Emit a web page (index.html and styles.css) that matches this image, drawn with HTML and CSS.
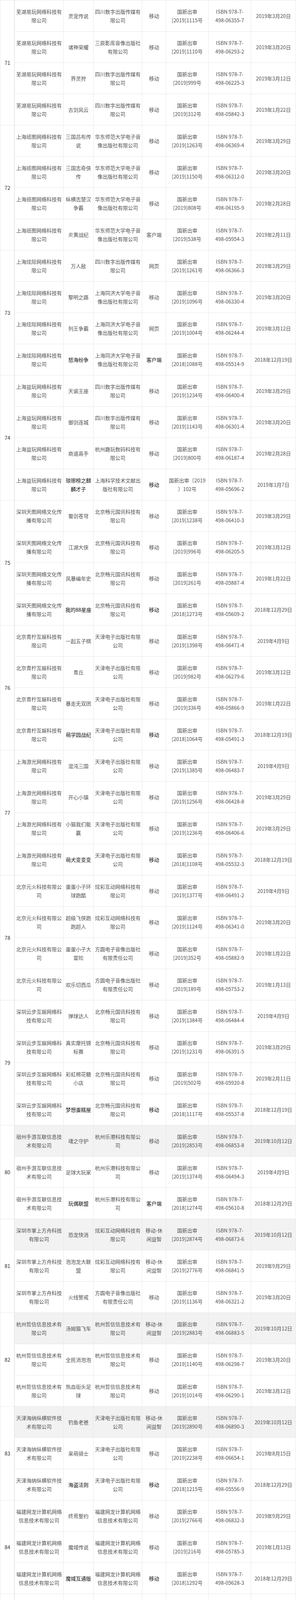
FILE: index.html
```html
<!DOCTYPE html>
<html lang="zh-CN">
<head>
<meta charset="utf-8">
<title>游戏审批列表</title>
<link rel="stylesheet" href="styles.css">
</head>
<body>
<div class="sheet">
<div class="no r4">71</div>
<div class="c">芜湖易玩网络科技有限公司</div><div class="c">灵宠传说</div><div class="c">四川数字出版传媒有限公司</div><div class="c">移动</div><div class="c">国新出审<br>[2019]1115号</div><div class="c">ISBN 978-7-<br>498-06355-7</div><div class="c">2019年3月20日</div>
<div class="c">芜湖易玩网络科技有限公司</div><div class="c">诸神荣耀</div><div class="c">三辰影库音像出版社有限公司</div><div class="c">移动</div><div class="c">国新出审<br>[2019]1110号</div><div class="c">ISBN 978-7-<br>498-06293-2</div><div class="c">2019年3月20日</div>
<div class="c">芜湖易玩网络科技有限公司</div><div class="c">界灵狩</div><div class="c">四川数字出版传媒有限公司</div><div class="c">移动</div><div class="c">国新出审<br>[2019]999号</div><div class="c">ISBN 978-7-<br>498-06225-3</div><div class="c">2019年3月12日</div>
<div class="c">芜湖易玩网络科技有限公司</div><div class="c">古剑风云</div><div class="c">四川数字出版传媒有限公司</div><div class="c">移动</div><div class="c">国新出审<br>[2019]312号</div><div class="c">ISBN 978-7-<br>498-05842-3</div><div class="c">2019年1月22日</div>

<div class="no r4">72</div>
<div class="c">上海班图网络科技有限公司</div><div class="c">三国吕布传说</div><div class="c">华东师范大学电子音像出版社有限公司</div><div class="c">移动</div><div class="c">国新出审<br>[2019]1263号</div><div class="c">ISBN 978-7-<br>498-06369-4</div><div class="c">2019年3月29日</div>
<div class="c">上海班图网络科技有限公司</div><div class="c">三国志奇侠传</div><div class="c">华东师范大学电子音像出版社有限公司</div><div class="c">移动</div><div class="c">国新出审<br>[2019]1150号</div><div class="c">ISBN 978-7-<br>498-06312-0</div><div class="c">2019年3月20日</div>
<div class="c">上海班图网络科技有限公司</div><div class="c">纵横志楚汉争霸</div><div class="c">华东师范大学电子音像出版社有限公司</div><div class="c">移动</div><div class="c">国新出审<br>[2019]808号</div><div class="c">ISBN 978-7-<br>498-06195-9</div><div class="c">2019年2月28日</div>
<div class="c">上海班图网络科技有限公司</div><div class="c">炎黄战纪</div><div class="c">华东师范大学电子音像出版社有限公司</div><div class="c">客户端</div><div class="c">国新出审<br>[2019]538号</div><div class="c">ISBN 978-7-<br>498-05954-3</div><div class="c">2019年2月11日</div>

<div class="no r4">73</div>
<div class="c">上海炫际网络科技有限公司</div><div class="c">万人敌</div><div class="c">四川数字出版传媒有限公司</div><div class="c">网页</div><div class="c">国新出审<br>[2019]1261号</div><div class="c">ISBN 978-7-<br>498-06366-3</div><div class="c">2019年3月29日</div>
<div class="c">上海炫际网络科技有限公司</div><div class="c">黎明之路</div><div class="c">上海同济大学电子音像出版社有限公司</div><div class="c">移动</div><div class="c">国新出审<br>[2019]1096号</div><div class="c">ISBN 978-7-<br>498-06330-4</div><div class="c">2019年3月20日</div>
<div class="c">上海炫际网络科技有限公司</div><div class="c">列王争霸</div><div class="c">上海同济大学电子音像出版社有限公司</div><div class="c">网页</div><div class="c">国新出审<br>[2019]1004号</div><div class="c">ISBN 978-7-<br>498-06244-4</div><div class="c">2019年3月12日</div>
<div class="c">上海炫际网络科技有限公司</div><div class="c dk">怒海纷争</div><div class="c">上海同济大学电子音像出版社有限公司</div><div class="c dk">客户端</div><div class="c">国新出审<br>[2018]1088号</div><div class="c">ISBN 978-7-<br>498-05514-9</div><div class="c">2018年12月19日</div>

<div class="no r4">74</div>
<div class="c">上海益玩网络科技有限公司</div><div class="c">天谕王座</div><div class="c">四川数字出版传媒有限公司</div><div class="c">移动</div><div class="c">国新出审<br>[2019]1234号</div><div class="c">ISBN 978-7-<br>498-06400-4</div><div class="c">2019年3月29日</div>
<div class="c">上海益玩网络科技有限公司</div><div class="c">御剑连城</div><div class="c">四川数字出版传媒有限公司</div><div class="c">移动</div><div class="c">国新出审<br>[2019]1143号</div><div class="c">ISBN 978-7-<br>498-06301-4</div><div class="c">2019年3月20日</div>
<div class="c">上海益玩网络科技有限公司</div><div class="c">商道高手</div><div class="c">杭州趣玩数码科技有限公司</div><div class="c">移动</div><div class="c">国新出审<br>[2019]800号</div><div class="c">ISBN 978-7-<br>498-06187-4</div><div class="c">2019年2月28日</div>
<div class="c">上海益玩网络科技有限公司</div><div class="c dk">琅琊榜之麒<br>麟才子</div><div class="c">上海科学技术文献出版社有限公司</div><div class="c dk">移动</div><div class="c">国新出审〔2019<br>〕102号</div><div class="c">ISBN 978-7-<br>498-05696-2</div><div class="c">2019年1月7日</div>

<div class="no r4">75</div>
<div class="c">深圳天图网络文化传播有限公司</div><div class="c">蜀剑苍穹</div><div class="c">北京畅元国讯科技有限公司</div><div class="c">移动</div><div class="c">国新出审<br>[2019]1238号</div><div class="c">ISBN 978-7-<br>498-06410-3</div><div class="c">2019年3月29日</div>
<div class="c">深圳天图网络文化传播有限公司</div><div class="c">江湖大侠</div><div class="c">北京畅元国讯科技有限公司</div><div class="c">移动</div><div class="c">国新出审<br>[2019]996号</div><div class="c">ISBN 978-7-<br>498-06205-5</div><div class="c">2019年3月12日</div>
<div class="c">深圳天图网络文化传播有限公司</div><div class="c">风暴编年史</div><div class="c">北京畅元国讯科技有限公司</div><div class="c">移动</div><div class="c">国新出审<br>[2019]261号</div><div class="c">ISBN 978-7-<br>498-05887-4</div><div class="c">2019年1月22日</div>
<div class="c">深圳天图网络文化传播有限公司</div><div class="c dk">我的88星座</div><div class="c">北京畅元国讯科技有限公司</div><div class="c dk">移动</div><div class="c">国新出审<br>[2018]1273号</div><div class="c">ISBN 978-7-<br>498-05609-2</div><div class="c">2018年12月29日</div>

<div class="no r4">76</div>
<div class="c">北京青柠互娱科技有限公司</div><div class="c">一起五子棋</div><div class="c">天津电子出版社有限公司</div><div class="c">移动</div><div class="c">国新出审<br>[2019]1398号</div><div class="c">ISBN 978-7-<br>498-06471-4</div><div class="c">2019年4月9日</div>
<div class="c">北京青柠互娱科技有限公司</div><div class="c">青丘</div><div class="c">天津电子出版社有限公司</div><div class="c">移动</div><div class="c">国新出审<br>[2019]982号</div><div class="c">ISBN 978-7-<br>498-06279-6</div><div class="c">2019年3月12日</div>
<div class="c">北京青柠互娱科技有限公司</div><div class="c">暴走无双团</div><div class="c">天津电子出版社有限公司</div><div class="c">移动</div><div class="c">国新出审<br>[2019]336号</div><div class="c">ISBN 978-7-<br>498-05866-9</div><div class="c">2019年1月22日</div>
<div class="c">北京青柠互娱科技有限公司</div><div class="c dk">萌学园战纪</div><div class="c">天津电子出版社有限公司</div><div class="c dk">移动</div><div class="c">国新出审<br>[2018]1064号</div><div class="c">ISBN 978-7-<br>498-05491-3</div><div class="c">2018年12月19日</div>

<div class="no r4">77</div>
<div class="c">上海游光网络科技有限公司</div><div class="c">混沌三国</div><div class="c">天津电子出版社有限公司</div><div class="c">移动</div><div class="c">国新出审<br>[2019]1385号</div><div class="c">ISBN 978-7-<br>498-06483-7</div><div class="c">2019年4月9日</div>
<div class="c">上海游光网络科技有限公司</div><div class="c">开心小镇</div><div class="c">天津电子出版社有限公司</div><div class="c">移动</div><div class="c">国新出审<br>[2019]1256号</div><div class="c">ISBN 978-7-<br>498-06428-8</div><div class="c">2019年3月29日</div>
<div class="c">上海游光网络科技有限公司</div><div class="c">小猫我们能<br>赢</div><div class="c">天津电子出版社有限公司</div><div class="c">移动</div><div class="c">国新出审<br>[2019]1236号</div><div class="c">ISBN 978-7-<br>498-06406-6</div><div class="c">2019年3月29日</div>
<div class="c">上海游光网络科技有限公司</div><div class="c dk">萌犬变变变</div><div class="c">天津电子出版社有限公司</div><div class="c dk">移动</div><div class="c">国新出审<br>[2018]1108号</div><div class="c">ISBN 978-7-<br>498-05532-3</div><div class="c">2018年12月19日</div>

<div class="no r4">78</div>
<div class="c">北京元火科技有限公司</div><div class="c">蛋蛋小子环<br>球跑酷</div><div class="c">炫彩互动网络科技有限公司</div><div class="c">移动</div><div class="c">国新出审<br>[2019]1377号</div><div class="c">ISBN 978-7-<br>498-06491-2</div><div class="c">2019年4月9日</div>
<div class="c">北京元火科技有限公司</div><div class="c">超级飞侠跑<br>跑超人</div><div class="c">炫彩互动网络科技有限公司</div><div class="c">移动</div><div class="c">国新出审<br>[2019]1124号</div><div class="c">ISBN 978-7-<br>498-06341-0</div><div class="c">2019年3月20日</div>
<div class="c">北京元火科技有限公司</div><div class="c">蛋蛋小子大<br>冒险</div><div class="c">方圆电子音像出版社有限责任公司</div><div class="c">移动</div><div class="c">国新出审<br>[2019]352号</div><div class="c">ISBN 978-7-<br>498-05882-9</div><div class="c">2019年1月22日</div>
<div class="c">北京元火科技有限公司</div><div class="c">欢乐切西瓜</div><div class="c">方圆电子音像出版社有限责任公司</div><div class="c">移动</div><div class="c">国新出审<br>[2019]189号</div><div class="c">ISBN 978-7-<br>498-05753-2</div><div class="c">2019年1月13日</div>

<div class="no r4">79</div>
<div class="c">深圳云步互娱网络科技有限公司</div><div class="c">弹球达人</div><div class="c">北京畅元国讯科技有限公司</div><div class="c">移动</div><div class="c">国新出审<br>[2019]1384号</div><div class="c">ISBN 978-7-<br>498-06484-4</div><div class="c">2019年4月9日</div>
<div class="c">深圳云步互娱网络科技有限公司</div><div class="c">真实摩托锦<br>标赛</div><div class="c">北京畅元国讯科技有限公司</div><div class="c">移动</div><div class="c">国新出审<br>[2019]1231号</div><div class="c">ISBN 978-7-<br>498-06391-5</div><div class="c">2019年3月29日</div>
<div class="c">深圳云步互娱网络科技有限公司</div><div class="c">彩虹棉花糖<br>小店</div><div class="c">北京畅元国讯科技有限公司</div><div class="c">移动</div><div class="c">国新出审<br>[2019]502号</div><div class="c">ISBN 978-7-<br>498-05920-8</div><div class="c">2019年2月11日</div>
<div class="c">深圳云步互娱网络科技有限公司</div><div class="c dk">梦想蛋糕屋</div><div class="c">北京畅元国讯科技有限公司</div><div class="c dk">移动</div><div class="c">国新出审<br>[2018]1117号</div><div class="c">ISBN 978-7-<br>498-05537-8</div><div class="c">2018年12月19日</div>

<div class="no r3">80</div>
<div class="c hl">宿州手游互联信息技术有限公司</div><div class="c hl">魂之守护</div><div class="c hl">杭州乐港科技有限公司</div><div class="c hl">移动</div><div class="c hl">国新出审<br>[2019]2853号</div><div class="c hl">ISBN 978-7-<br>498-06853-8</div><div class="c hl">2019年10月12日</div>
<div class="c">宿州手游互联信息技术有限公司</div><div class="c">足球大玩家</div><div class="c">杭州乐港科技有限公司</div><div class="c">移动</div><div class="c">国新出审<br>[2019]1374号</div><div class="c">ISBN 978-7-<br>498-06494-3</div><div class="c">2019年4月9日</div>
<div class="c">宿州手游互联信息技术有限公司</div><div class="c dk">玩偶联盟</div><div class="c">杭州乐港科技有限公司</div><div class="c dk">客户端</div><div class="c">国新出审<br>[2018]1274号</div><div class="c">ISBN 978-7-<br>498-05610-8</div><div class="c">2018年12月29日</div>

<div class="no r3">81</div>
<div class="c hl">深圳市掌上方舟科技有限公司</div><div class="c hl">恐龙快消</div><div class="c hl">炫彩互动网络科技有限公司</div><div class="c hl">移动-休<br>闲益智</div><div class="c hl">国新出审<br>[2019]2874号</div><div class="c hl">ISBN 978-7-<br>498-06873-6</div><div class="c hl">2019年10月12日</div>
<div class="c">深圳市掌上方舟科技有限公司</div><div class="c">泡泡龙大联<br>盟</div><div class="c">炫彩互动网络科技有限公司</div><div class="c">移动-休<br>闲益智</div><div class="c">国新出审<br>[2019]2776号</div><div class="c">ISBN 978-7-<br>498-06841-5</div><div class="c">2019年9月29日</div>
<div class="c">深圳市掌上方舟科技有限公司</div><div class="c">火线警戒</div><div class="c">方圆电子音像出版社有限责任公司</div><div class="c">移动</div><div class="c">国新出审<br>[2019]1136号</div><div class="c">ISBN 978-7-<br>498-06321-2</div><div class="c">2019年3月20日</div>

<div class="no r3">82</div>
<div class="c hl">杭州哲信信息技术有限公司</div><div class="c hl">汤姆猫飞车</div><div class="c hl">杭州哲信信息技术有限公司</div><div class="c hl">移动-休<br>闲益智</div><div class="c hl">国新出审<br>[2019]2883号</div><div class="c hl">ISBN 978-7-<br>498-06883-5</div><div class="c hl">2019年10月12日</div>
<div class="c">杭州哲信信息技术有限公司</div><div class="c">全民消泡泡</div><div class="c">杭州哲信信息技术有限公司</div><div class="c">移动</div><div class="c">国新出审<br>[2019]1140号</div><div class="c">ISBN 978-7-<br>498-06298-7</div><div class="c">2019年3月20日</div>
<div class="c">杭州哲信信息技术有限公司</div><div class="c">热血街头足<br>球</div><div class="c">杭州哲信信息技术有限公司</div><div class="c">移动</div><div class="c">国新出审<br>[2019]1014号</div><div class="c">ISBN 978-7-<br>498-06290-1</div><div class="c">2019年3月12日</div>

<div class="no r3">83</div>
<div class="c hl">天津海纳纵横软件技术有限公司</div><div class="c hl">钓鱼老爸</div><div class="c hl">天津电子出版社有限公司</div><div class="c hl">移动-休<br>闲益智</div><div class="c hl">国新出审<br>[2019]2890号</div><div class="c hl">ISBN 978-7-<br>498-06890-3</div><div class="c hl">2019年10月12日</div>
<div class="c">天津海纳纵横软件技术有限公司</div><div class="c">呆萌骑士</div><div class="c">天津电子出版社有限公司</div><div class="c">移动</div><div class="c">国新出审<br>[2019]2238号</div><div class="c">ISBN 978-7-<br>498-06654-1</div><div class="c">2019年8月15日</div>
<div class="c">天津海纳纵横软件技术有限公司</div><div class="c dk">海盗法则</div><div class="c">天津电子出版社有限公司</div><div class="c dk">移动</div><div class="c">国新出审<br>[2018]1215号</div><div class="c">ISBN 978-7-<br>498-05556-9</div><div class="c">2018年12月29日</div>

<div class="no r3">84</div>
<div class="c">福建网龙计算机网络信息技术有限公司</div><div class="c">终焉誓约</div><div class="c">福建网龙计算机网络信息技术有限公司</div><div class="c">移动</div><div class="c">国新出审<br>[2019]2766号</div><div class="c">ISBN 978-7-<br>498-06832-3</div><div class="c">2019年9月29日</div>
<div class="c">福建网龙计算机网络信息技术有限公司</div><div class="c">魔域传说</div><div class="c">福建网龙计算机网络信息技术有限公司</div><div class="c">移动</div><div class="c">国新出审<br>[2019]216号</div><div class="c">ISBN 978-7-<br>498-05785-3</div><div class="c">2019年1月13日</div>
<div class="c">福建网龙计算机网络信息技术有限公司</div><div class="c dk">魔域互通版</div><div class="c">福建网龙计算机网络信息技术有限公司</div><div class="c dk">移动</div><div class="c">国新出审<br>[2018]1292号</div><div class="c">ISBN 978-7-<br>498-05628-3</div><div class="c">2018年12月29日</div>

<div class="no r3">85</div>
<div class="c">成都西山居世游科技有限公司</div><div class="c">双生视界</div><div class="c">成都西山居世游科技有限公司</div><div class="c">移动</div><div class="c">国新出审<br>[2019]2768号</div><div class="c">ISBN 978-7-<br>498-06831-6</div><div class="c">2019年9月29日</div>
<div class="c">成都西山居世游科技有限公司</div><div class="c">剑网3</div><div class="c">成都西山居世游科技有限公司</div><div class="c">客户端</div><div class="c">国新出审<br>[2019]1869号</div><div class="c">ISBN 978-7-<br>498-06568-1</div><div class="c">2019年6月28日</div>
<div class="c">成都西山居世游科技有限公司</div><div class="c">四海仙妖记</div><div class="c">天津电子出版社有限公司</div><div class="c">移动</div><div class="c">国新出审<br>[2019]1266号</div><div class="c">ISBN 978-7-<br>498-06372-4</div><div class="c">2019年3月29日</div>

<div class="no r3">86</div>
<div class="c">上海星玩网络科技有限公司</div><div class="c">亮剑</div><div class="c">上海科学技术文献出版社有限公司</div><div class="c">移动</div><div class="c">国新出审<br>[2019]2783号</div><div class="c">ISBN 978-7-<br>498-06848-4</div><div class="c">2019年9月29日</div>
<div class="c">上海星玩网络科技有限公司</div><div class="c dk">影之痕</div><div class="c">四川数字出版传媒有限公司</div><div class="c dk">移动</div><div class="c">国新出审<br>[2018]1275号</div><div class="c">ISBN 978-7-<br>498-05611-5</div><div class="c">2018年12月29日</div>
<div class="c">上海星玩网络科技有限公司</div><div class="c dk">修真情缘</div><div class="c">四川数字出版传媒有限公司</div><div class="c dk">移动</div><div class="c">国新出审<br>[2018]1073号</div><div class="c">ISBN 978-7-<br>498-05499-9</div><div class="c">2018年12月19日</div>

<div class="no r3">87</div>
<div class="c">上海数龙科技有限公司</div><div class="c">小森生活</div><div class="c">上海数龙科技有限公司</div><div class="c">移动</div><div class="c">国新出审<br>[2019]2721号</div><div class="c">ISBN 978-7-<br>498-06813-2</div><div class="c">2019年9月24日</div>
<div class="c">上海数龙科技有限公司</div><div class="c">通感纪元</div><div class="c">天津电子出版社有限公司</div><div class="c">移动</div><div class="c">国新出审<br>[2019]2644号</div><div class="c">ISBN 978-7-<br>498-06772-2</div><div class="c">2019年9月18日</div>
<div class="c">上海数龙科技有限公司</div><div class="c">决战玛法</div><div class="c">上海数龙科技有限公司</div><div class="c">移动</div><div class="c">国新出审<br>[2019]1381号</div><div class="c">ISBN 978-7-<br>498-06487-5</div><div class="c">2019年4月9日</div>

<div class="no r3">88</div>
<div class="c">武汉微派网络科技有限公司</div><div class="c">坦克无敌</div><div class="c">湖北省扬子江影音有限责任公司</div><div class="c">移动-休<br>闲益智</div><div class="c">国新出审<br>[2019]2739号</div><div class="c">ISBN 978-7-<br>498-06830-9</div><div class="c">2019年9月24日</div>
<div class="c">武汉微派网络科技有限公司</div><div class="c">经典水管工</div><div class="c">华中科技大学电子音像出版社</div><div class="c">移动-休<br>闲益智</div><div class="c">国新出审<br>[2019]2552号</div><div class="c">ISBN 978-7-<br>498-06764-7</div><div class="c">2019年9月5日</div>
<div class="c">武汉微派网络科技有限公司</div><div class="c">贪吃蛇头很<br>铁</div><div class="c">北京伯通电子出版社</div><div class="c">移动</div><div class="c">国新出审<br>[2019]1288号</div><div class="c">ISBN 978-7-<br>498-06404-2</div><div class="c">2019年3月29日</div>

<div class="no r3">89</div>
<div class="c">上海莉莉丝网络科技有限公司</div><div class="c">剑与远征</div><div class="c">上海科学技术文献出版社有限公司</div><div class="c">移动</div><div class="c">国新出审<br>[2019]2649号</div><div class="c">ISBN 978-7-<br>498-06777-7</div><div class="c">2019年9月18日</div>
<div class="c">上海莉莉丝网络科技有限公司</div><div class="c">魔法纹章</div><div class="c">上海科学技术文献出版社有限公司</div><div class="c">移动</div><div class="c">国新出审<br>[2019]969号</div><div class="c">ISBN 978-7-<br>498-06263-5</div><div class="c">2019年3月12日</div>
<div class="c">上海莉莉丝网络科技有限公司</div><div class="c">炸裂坦克团</div><div class="c">上海科学技术文献出版社有限公司</div><div class="c">移动</div><div class="c">国新出审<br>[2019]649号</div><div class="c">ISBN 978-7-<br>498-06087-7</div><div class="c">2019年2月26日</div>

<div class="no r3">90</div>
<div class="c">上海映雄体育文化有限公司</div><div class="c">战双帕弥什</div><div class="c">上海科学技术文献出版社有限公司</div><div class="c">移动</div><div class="c">国新出审<br>[2019]2655号</div><div class="c">ISBN 978-7-<br>498-06783-8</div><div class="c">2019年9月18日</div>
<div class="c">上海映雄体育文化有限公司</div><div class="c">苍蓝前线</div><div class="c">上海科学技术文献出版社有限公司</div><div class="c">移动</div><div class="c">国新出审<br>[2019]964号</div><div class="c">ISBN 978-7-<br>498-06254-3</div><div class="c">2019年3月12日</div>
<div class="c">上海映雄体育文化有限公司</div><div class="c">玩具英雄</div><div class="c">上海科学技术文献出版社有限公司</div><div class="c">移动</div><div class="c">国新出审<br>[2019]335号</div><div class="c">ISBN 978-7-<br>498-05865-2</div><div class="c">2019年1月22日</div>

<div class="no r3">91</div>
<div class="c">上海恺英网络科技有限公司</div><div class="c">新倚天屠龙<br>记</div><div class="c">上海恺英网络科技有限公司</div><div class="c">移动</div><div class="c">国新出审<br>[2019]2516号</div><div class="c">ISBN 978-7-<br>498-06729-6</div><div class="c">2019年9月5日</div>
<div class="c">上海恺英网络科技有限公司</div><div class="c">我在三国有<br>座城</div><div class="c">上海恺英网络科技有限公司</div><div class="c">移动</div><div class="c">国新出审<br>[2019]330号</div><div class="c">ISBN 978-7-<br>498-05860-7</div><div class="c">2019年1月22日</div>
<div class="c">上海恺英网络科技有限公司</div><div class="c dk">蜀山传奇H5</div><div class="c">上海恺英网络科技有限公司</div><div class="c dk">移动</div><div class="c">国新出审〔2019<br>〕91号</div><div class="c">ISBN 978-7-<br>498-05686-3</div><div class="c">2019年1月7日</div>

<div class="no r3">92</div>
<div class="c">苏州大禹网络科技有限公司</div><div class="c">荒野日记：<br>孤岛</div><div class="c">江苏凤凰电子音像出版社有限公司</div><div class="c">移动</div><div class="c">国新出审<br>[2019]2526号</div><div class="c">ISBN 978-7-<br>498-06739-5</div><div class="c">2019年9月5日</div>
<div class="c">苏州大禹网络科技有限公司</div><div class="c">荒野日记</div><div class="c">江苏凤凰电子音像出版社有限公司</div><div class="c">移动</div><div class="c">国新出审<br>[2019]1089号</div><div class="c">ISBN 978-7-<br>498-06349-6</div><div class="c">2019年3月20日</div>
<div class="c">苏州大禹网络科技有限公司</div><div class="c">战就战</div><div class="c">江苏凤凰电子音像出版社有限公司</div><div class="c">客户端</div><div class="c">国新出审<br>[2019]692号</div><div class="c">ISBN 978-7-<br>498-06064-8</div><div class="c">2019年2月26日</div>
</div>
</body>
</html>
```

FILE: styles.css
```css
html, body {
  margin: 0;
  padding: 0;
  background: #fff;
}

body {
  font-family: "Noto Sans CJK SC", "Noto Sans", sans-serif;
}

.sheet {
  width: 759px;
  box-sizing: border-box;
  display: grid;
  grid-template-columns: 36px 124px 76px 124px 60px 108px 108px 114px;
  grid-auto-rows: 79px;
  gap: 1px;
  padding: 1px;
  background: #e8e8e8;
}

.c, .no {
  display: flex;
  align-items: center;
  justify-content: center;
  text-align: center;
  background: #fff;
  padding: 0 3px;
  font-size: 13px;
  line-height: 22px;
  color: #555;
  word-break: break-all;
  overflow-wrap: anywhere;
}

.no {
  color: #333;
  padding: 0;
  box-shadow: inset -1px 0 0 #e8e8e8;
}

.r4 { grid-row: span 4; }
.r3 { grid-row: span 3; }

.c.hl {
  background: #f2f2f2;
}

.c.dk {
  color: #111;
}
```
